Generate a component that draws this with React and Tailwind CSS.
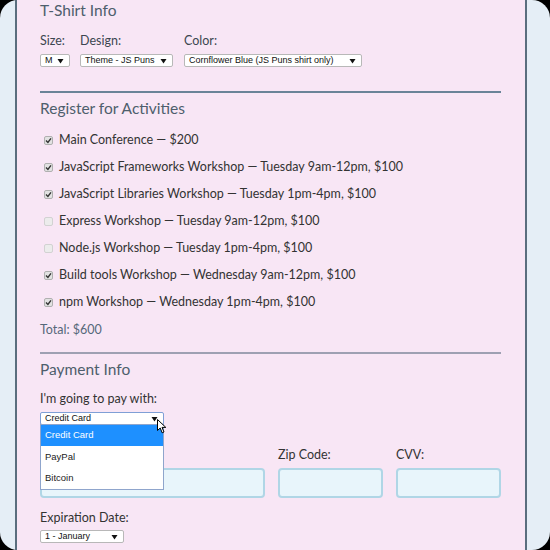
import React from "react";

const Caret = () => (
  <svg width="7" height="6" viewBox="0 0 7 6" className="shrink-0 ml-[3px]">
    <path d="M0.5 1 L6.5 1 L3.5 5.5 Z" fill="#111" />
  </svg>
);

const Select = ({ children, className = "" }) => (
  <div
    className={`h-[13px] bg-white border border-[#b8b8b8] rounded-[2px] flex items-center justify-between pl-[4px] pr-[5px] text-[9px] leading-none text-[#111] font-['Liberation_Sans',Arial,sans-serif] ${className}`}
  >
    <span className="whitespace-nowrap">{children}</span>
    <Caret />
  </div>
);

const Check = ({ checked }) => (
  <span
    className={`w-[9px] h-[9px] rounded-[2px] border flex items-center justify-center shrink-0 ${
      checked ? "bg-[#e2e2e2] border-[#b0b0b0]" : "bg-[#ececec] border-[#d2d2d2]"
    }`}
  >
    {checked && (
      <svg width="7" height="7" viewBox="0 0 7 7">
        <path d="M1 3.6 L2.9 5.5 L6 1.3" stroke="#333" strokeWidth="1.4" fill="none" />
      </svg>
    )}
  </span>
);

const activities = [
  ["Main Conference — $200", true],
  ["JavaScript Frameworks Workshop — Tuesday 9am-12pm, $100", true],
  ["JavaScript Libraries Workshop — Tuesday 1pm-4pm, $100", true],
  ["Express Workshop — Tuesday 9am-12pm, $100", false],
  ["Node.js Workshop — Tuesday 1pm-4pm, $100", false],
  ["Build tools Workshop — Wednesday 9am-12pm, $100", true],
  ["npm Workshop — Wednesday 1pm-4pm, $100", true],
];

export default function App() {
  return (
    <div className="w-[550px] h-[550px] bg-black overflow-hidden">
      <div className="w-full h-full rounded-[18px] bg-[#e5eef6] flex">
        <div className="ml-[15px] w-[512px] h-full border-x-2 border-[#5a6e7e] bg-[#f8e6f5] pl-[23px] pr-[24px] font-['Lato',sans-serif] text-[#333]">
          <h2 className="text-[15.5px] leading-[20px] text-[#4e5e6c]">T-Shirt Info</h2>
          <div className="mt-[14px] flex gap-[10px] text-[12.5px]">
            <div className="flex flex-col">
              <span className="leading-[14px] text-[#3c4650]">Size:</span>
              <Select className="mt-[6px] w-[30px]">M</Select>
            </div>
            <div className="flex flex-col">
              <span className="leading-[14px] text-[#3c4650]">Design:</span>
              <Select className="mt-[6px] w-[93px]">Theme - JS Puns</Select>
            </div>
            <div className="flex flex-col ml-[1px]">
              <span className="leading-[14px] text-[#3c4650]">Color:</span>
              <Select className="mt-[6px] w-[178px]">Cornflower Blue (JS Puns shirt only)</Select>
            </div>
          </div>
          <div className="mt-[24px] h-[2px] bg-[#6a8498]" />
          <h2 className="mt-[5px] text-[15.5px] leading-[20px] text-[#4e5e6c]">Register for Activities</h2>
          <div className="mt-[14px] flex flex-col gap-[11px]">
            {activities.map(([label, checked]) => (
              <div key={label} className="flex items-center h-[16px] text-[12.5px] text-[#333]">
                <span className="ml-[4px] mr-[6px]">
                  <Check checked={checked} />
                </span>
                <span>{label}</span>
              </div>
            ))}
          </div>
          <div className="mt-[12px] h-[16px] leading-[16px] text-[12.5px] text-[#56687a]">Total: $600</div>
          <div className="mt-[14px] h-[2px] bg-[#9ea0b2]" />
          <h2 className="mt-[5px] text-[15.5px] leading-[20px] text-[#4e5e6c]">Payment Info</h2>
          <div className="mt-[13px] text-[12.5px] leading-[14px] text-[#333]">I'm going to pay with:</div>
          <div className="relative mt-[6px] w-[124px] z-10">
            <Select className="w-[124px] !border-[#7f9fd6]">Credit Card</Select>
            <div className="absolute left-0 top-[12px] w-[124px] bg-white border border-[#8fa5cc] font-['Liberation_Sans',Arial,sans-serif] text-[9.5px] text-[#222]">
              <div className="h-[21px] bg-[#1e90ff] text-white flex items-center pl-[4px]">Credit Card</div>
              <div className="h-[21px] flex items-center pl-[4px] mt-[1px]">PayPal</div>
              <div className="h-[21px] flex items-center pl-[4px]">Bitcoin</div>
            </div>
            <svg
              className="absolute left-[117px] top-[7px]"
              width="11"
              height="15"
              viewBox="0 0 11 15"
            >
              <path d="M0.5 0.5 L0.5 11.5 L3.2 9 L5.2 13.8 L7 13 L5 8.4 L8.8 8.4 Z" fill="white" stroke="black" strokeWidth="1" />
            </svg>
          </div>
          <div className="mt-[23px] grid grid-cols-[225px_105px_105px] gap-x-[13px] text-[12.5px] text-[#333]">
            <span className="h-[14px]" />
            <span className="leading-[14px]">Zip Code:</span>
            <span className="leading-[14px]">CVV:</span>
            <div className="mt-[6px] h-[30px] rounded-[4px] border-2 border-[#b0d6e6] bg-[#e8f5fb]" />
            <div className="mt-[6px] h-[30px] rounded-[4px] border-2 border-[#b0d6e6] bg-[#e8f5fb]" />
            <div className="mt-[6px] h-[30px] rounded-[4px] border-2 border-[#b0d6e6] bg-[#e8f5fb]" />
          </div>
          <div className="mt-[13px] text-[12.5px] leading-[14px] text-[#333]">Expiration Date:</div>
          <Select className="mt-[5px] w-[84px]">1 - January</Select>
        </div>
      </div>
    </div>
  );
}
